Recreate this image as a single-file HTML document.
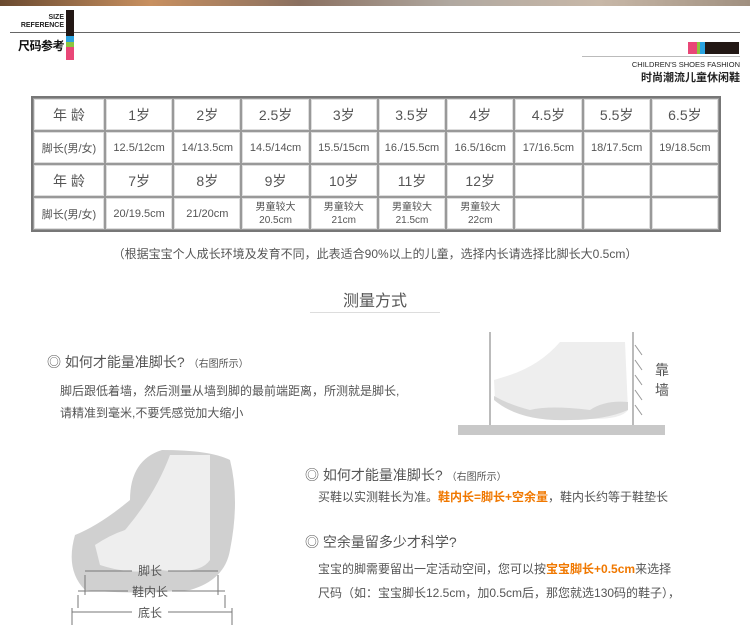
<!DOCTYPE html><html><head><meta charset="utf-8"><style>
body{margin:0;width:750px;height:632px;background:#fff;position:relative;overflow:hidden;font-family:"Liberation Sans","Noto Sans CJK SC",sans-serif;color:#555}
.a{position:absolute}
table{position:absolute;left:31px;top:96px;width:690px;table-layout:fixed;border-collapse:separate;border-spacing:0;border:2px solid #777}
td{border:1px solid #999;box-shadow:inset 0 0 0 1px #ddd;height:31px;text-align:center;font-size:14px;color:#555;padding:0;white-space:nowrap;overflow:hidden}
td.s{font-size:11px}td.t{font-size:10px;line-height:13px}
.o{color:#f07800;font-weight:bold}
</style></head><body>
<div class="a" style="left:0;top:0;width:750px;height:6px;background:linear-gradient(90deg,#6a4a30,#c89060 20%,#8a7060 40%,#b0a8a0 60%,#c8b8a8 80%,#a09080)"></div>
<div class="a" style="left:10px;top:32px;width:730px;height:1px;background:#666"></div>
<div class="a" style="left:20px;top:14px;width:44px;text-align:right;font-size:7px;line-height:8px;color:#222;font-weight:bold">SIZE<br>REFERENCE</div>
<div class="a" style="left:10px;top:37px;width:54px;text-align:right;font-size:12px;color:#111;font-weight:bold;letter-spacing:-0.5px">尺码参考</div>
<div class="a" style="left:66px;top:10px;width:8px;height:26px;background:#231815"></div>
<div class="a" style="left:66px;top:36px;width:8px;height:6px;background:#2aa3e0"></div>
<div class="a" style="left:66px;top:42px;width:8px;height:5px;background:#8cc63e"></div>
<div class="a" style="left:66px;top:47px;width:8px;height:13px;background:#e94777"></div>
<div class="a" style="left:688px;top:42px;width:9px;height:12px;background:#e94777"></div>
<div class="a" style="left:697px;top:42px;width:3px;height:12px;background:#8cc63e"></div>
<div class="a" style="left:700px;top:42px;width:5px;height:12px;background:#2aa3e0"></div>
<div class="a" style="left:705px;top:42px;width:34px;height:12px;background:#231815"></div>
<div class="a" style="left:582px;top:56px;width:158px;height:1px;background:#bbb"></div>
<div class="a" style="left:560px;top:60px;width:180px;text-align:right;font-size:7.5px;color:#222">CHILDREN'S SHOES FASHION</div>
<div class="a" style="left:560px;top:69px;width:180px;text-align:right;font-size:11px;color:#222;font-weight:bold">时尚潮流儿童休闲鞋</div>
<table>
<colgroup><col style="width:72px"><col span="9"></colgroup>
<tr><td>年 龄</td><td>1岁</td><td>2岁</td><td>2.5岁</td><td>3岁</td><td>3.5岁</td><td>4岁</td><td>4.5岁</td><td>5.5岁</td><td>6.5岁</td></tr>
<tr><td class="s">脚长(男/女)</td><td class="s">12.5/12cm</td><td class="s">14/13.5cm</td><td class="s">14.5/14cm</td><td class="s">15.5/15cm</td><td class="s">16./15.5cm</td><td class="s">16.5/16cm</td><td class="s">17/16.5cm</td><td class="s">18/17.5cm</td><td class="s">19/18.5cm</td></tr>
<tr><td>年 龄</td><td>7岁</td><td>8岁</td><td>9岁</td><td>10岁</td><td>11岁</td><td>12岁</td><td></td><td></td><td></td></tr>
<tr><td class="s">脚长(男/女)</td><td class="s">20/19.5cm</td><td class="s">21/20cm</td><td class="t">男童较大<br>20.5cm</td><td class="t">男童较大<br>21cm</td><td class="t">男童较大<br>21.5cm</td><td class="t">男童较大<br>22cm</td><td></td><td></td><td></td></tr>
</table>
<div class="a" style="left:0;top:245px;width:750px;text-align:center;font-size:12px;color:#555">（根据宝宝个人成长环境及发育不同，此表适合90%以上的儿童，选择内长请选择比脚长大0.5cm）</div>
<div class="a" style="left:0;top:287px;width:750px;text-align:center;font-size:16px;color:#555">测量方式</div>
<div class="a" style="left:310px;top:312px;width:130px;height:1px;background:#ddd"></div>
<div class="a" style="left:47px;top:352px;font-size:14px;color:#555">◎ 如何才能量准脚长? <span style="font-size:10px">（右图所示）</span></div>
<div class="a" style="left:60px;top:380px;font-size:12px;line-height:22px;color:#555">脚后跟低着墙，然后测量从墙到脚的最前端距离，所测就是脚长,<br>请精准到毫米,不要凭感觉加大缩小</div>
<svg class="a" style="left:430px;top:330px" width="240" height="110">
<line x1="60" y1="2" x2="60" y2="95" stroke="#777"/><line x1="203" y1="2" x2="203" y2="95" stroke="#777"/>
<g stroke="#999"><line x1="205" y1="15" x2="212" y2="25"/><line x1="205" y1="30" x2="212" y2="40"/><line x1="205" y1="45" x2="212" y2="55"/><line x1="205" y1="60" x2="212" y2="70"/><line x1="205" y1="75" x2="212" y2="85"/></g>
<rect x="28" y="95" width="207" height="10" fill="#c8c8c8"/>
<path d="M130 12 L195 12 L198 80 Q190 92 140 88 Q90 90 65 70 L64 50 L80 45 Q110 35 130 12Z" fill="#eee"/>
<path d="M64 70 Q90 92 140 90 Q175 90 198 80 L198 72 Q175 70 160 80 Q120 75 100 80 Q80 75 64 66Z" fill="#d6d6d6"/>
<text x="225" y="45" font-size="14" fill="#555">靠</text><text x="225" y="65" font-size="14" fill="#555">墙</text>
</svg>
<svg class="a" style="left:60px;top:450px" width="180" height="175">
<path d="M102 0 Q70 10 70 50 Q40 75 15 85 Q5 120 25 140 Q80 145 130 140 Q165 130 170 100 Q180 50 170 10 Q150 0 102 0Z" fill="#d0d0d0"/>
<path d="M110 5 L150 5 L150 110 Q140 125 100 120 Q70 125 40 115 L35 95 Q50 85 65 80 Q95 45 110 5Z" fill="#eee"/>
<g stroke="#777" fill="none"><line x1="12" y1="158" x2="12" y2="175"/><line x1="172" y1="158" x2="172" y2="175"/><line x1="18" y1="145" x2="18" y2="158"/><line x1="165" y1="145" x2="165" y2="158"/><line x1="25" y1="125" x2="25" y2="145"/><line x1="158" y1="125" x2="158" y2="145"/>
<line x1="25" y1="121" x2="72" y2="121"/><line x1="108" y1="121" x2="158" y2="121"/><line x1="18" y1="141" x2="68" y2="141"/><line x1="112" y1="141" x2="165" y2="141"/><line x1="12" y1="162" x2="72" y2="162"/><line x1="108" y1="162" x2="172" y2="162"/></g>
<text x="78" y="125" font-size="12" fill="#555">脚长</text><text x="72" y="146" font-size="12" fill="#555">鞋内长</text><text x="78" y="167" font-size="12" fill="#555">底长</text>
</svg>
<div class="a" style="left:305px;top:465px;font-size:14px;color:#555">◎ 如何才能量准脚长? <span style="font-size:10px">（右图所示）</span></div>
<div class="a" style="left:318px;top:488px;font-size:12px;color:#555">买鞋以实测鞋长为准。<span class="o">鞋内长=脚长+空余量</span>，鞋内长约等于鞋垫长</div>
<div class="a" style="left:305px;top:532px;font-size:14px;color:#555">◎ 空余量留多少才科学?</div>
<div class="a" style="left:318px;top:557px;font-size:12px;line-height:24px;color:#555">宝宝的脚需要留出一定活动空间，您可以按<span class="o">宝宝脚长+0.5cm</span>来选择<br>尺码（如：宝宝脚长12.5cm，加0.5cm后，那您就选130码的鞋子），</div>
</body></html>
